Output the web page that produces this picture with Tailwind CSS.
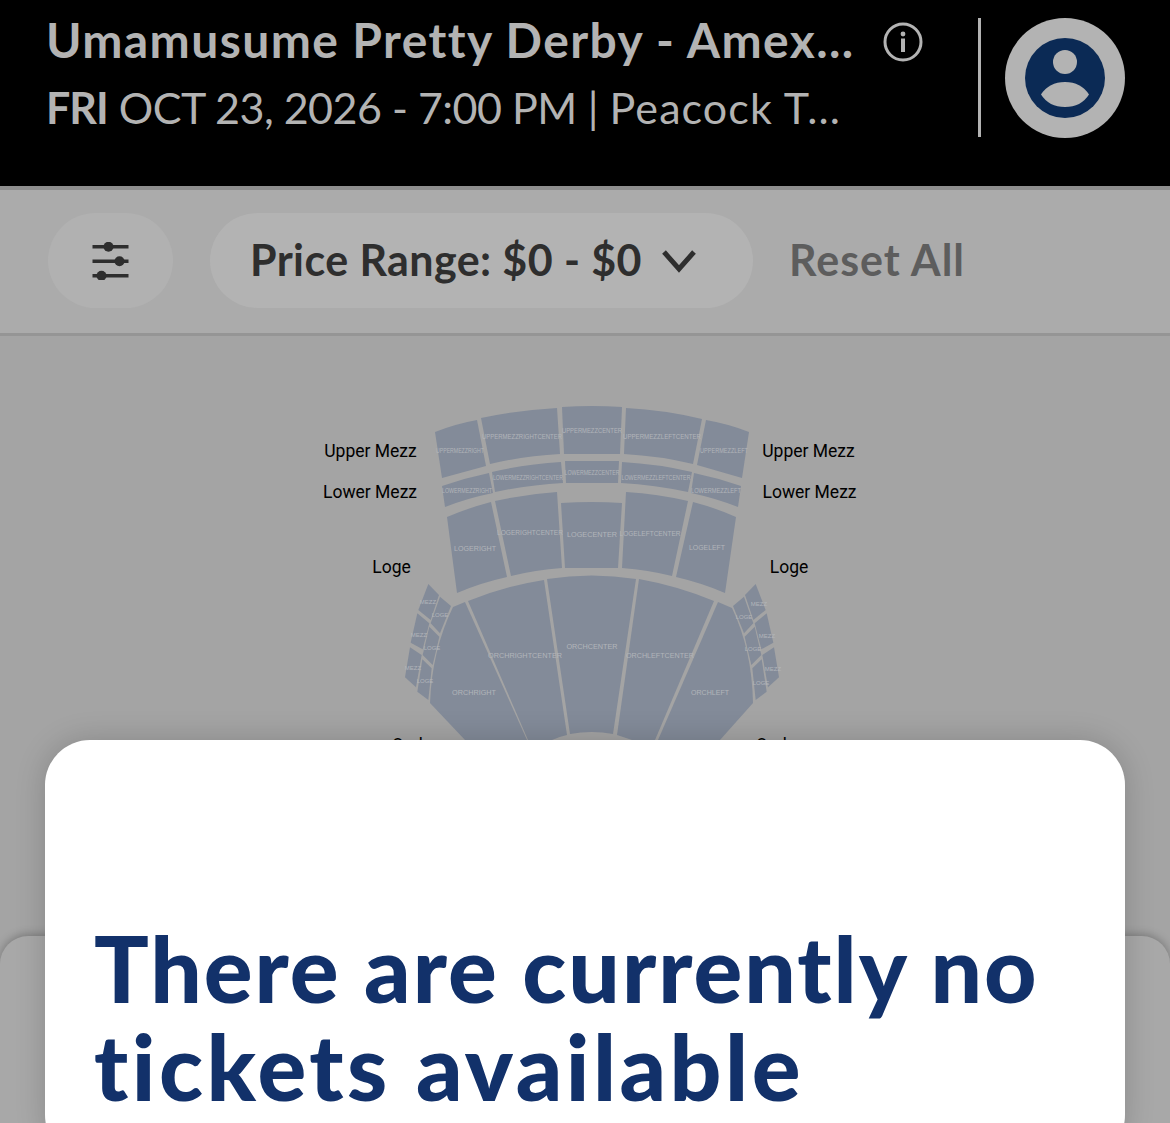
<!DOCTYPE html>
<html lang="en">
  <head>
    <meta charset="UTF-8" />
    <meta name="viewport" content="width=device-width, initial-scale=1.0" />
    <title>Tickets</title>
    <script src="https://cdn.jsdelivr.net/npm/@tailwindcss/browser@4"></script>
  </head>
  <body>
    <div class="relative flex flex-col w-[1170px] h-[1123px] overflow-hidden bg-[#a4a4a4] font-['Lato',sans-serif]">

      <!-- event header -->
      <header class="flex shrink-0 h-[190px] bg-black border-b-4 border-[#8e8e8e] pl-[46px] pt-[16px]">
        <div class="flex flex-col w-[932px]">
          <div class="flex items-center h-[48px]">
            <p class="w-[837px] whitespace-nowrap text-[48px] leading-[48px] font-bold text-[#b3b3b3] tracking-[1.4px]">Umamusume Pretty Derby - Amex...</p>
            <svg class="w-[42px] h-[42px] mt-[4px]" viewBox="0 0 42 42" fill="none">
              <circle cx="20" cy="21" r="18" stroke="#b3b3b3" stroke-width="3" />
              <circle cx="20" cy="13" r="2.4" fill="#b3b3b3" />
              <path d="M20 17.5V31" stroke="#b3b3b3" stroke-width="4" />
            </svg>
          </div>
          <p class="mt-[20px] whitespace-nowrap text-[43px] leading-[48px] text-[#b3b3b3]"><span class="font-bold tracking-[-1px]">FRI</span> <span class="tracking-[-0.5px]">OCT 23, 2026 - 7:00 PM</span> | <span class="tracking-[1.1px]">Peacock T...</span></p>
        </div>
        <div class="w-[3px] h-[119px] mt-[2px] bg-[#b3b3b3]"></div>
        <svg class="ml-[24px] mt-[2px] w-[120px] h-[120px]" viewBox="0 0 120 120">
          <circle cx="60" cy="60" r="60" fill="#b3b3b3" />
          <circle cx="60" cy="60" r="40" fill="#0b2a55" />
          <circle cx="60" cy="44" r="12" fill="#b3b3b3" />
          <path d="M36 76.5Q44 64 60 64Q76 64 84 76.5Q76 89 60 89Q44 89 36 76.5Z" fill="#b3b3b3" />
        </svg>
      </header>

      <!-- filters -->
      <div class="flex shrink-0 items-center h-[146px] bg-[#ababab] border-b-3 border-[#959595] pl-[48px] pb-[2px]">
        <button class="flex items-center justify-center w-[125px] h-[95px] rounded-full bg-[#b1b1b1]">
          <svg class="w-[38px] h-[38px]" viewBox="0 0 38 38" fill="#2e2e2e">
            <rect x="0.5" y="3" width="36" height="3.5" />
            <rect x="0.5" y="17.5" width="36" height="3.5" />
            <rect x="0.5" y="32" width="36" height="3.5" />
            <circle cx="16.5" cy="4.75" r="5" />
            <circle cx="27.5" cy="19.25" r="5" />
            <circle cx="9.5" cy="33.75" r="5" />
          </svg>
        </button>
        <button class="flex items-center ml-[37px] w-[543px] h-[95px] rounded-full bg-[#b3b3b3] pl-[40px]">
          <span class="w-[412px] text-left whitespace-nowrap text-[43px] font-bold tracking-[0.4px] text-[#2e2e2e]">Price Range: $0 - $0</span>
          <svg class="w-[34px] h-[24px]" viewBox="0 0 34 24" fill="none">
            <path d="M2 3l15 17L32 3" stroke="#2e2e2e" stroke-width="5" />
          </svg>
        </button>
        <button class="ml-[36px] whitespace-nowrap text-[43px] font-bold tracking-[1px] text-[#5d5d5d]">Reset All</button>
      </div>

      <!-- seat map -->
      <main class="relative flex-1">
        <svg class="absolute left-0 top-[-336px] w-[1170px] h-[1123px] font-['Roboto',sans-serif]" viewBox="0 0 1170 1123">
          <g fill="#838b99">
            <path d="M435 432Q455 424 477 420L486 466L442 478Z" />
            <path d="M481 418Q518 410 557 408L560 454Q524 456 490 464Z" />
            <path d="M562 407Q592 405 622 407L620 454H564Z" />
            <path d="M626 408Q665 410 702 419L693 464Q660 456 624 454Z" />
            <path d="M706 420Q729 424 749 432L742 478L697 465Z" />

            <path d="M442 486Q465 478 489 473L493 493Q468 498 445 507Z" />
            <path d="M492 472Q526 464 561 462L563 483Q528 485 495 492Z" />
            <path d="M565 461H619L618 483H566Z" />
            <path d="M622 462Q658 464 692 472L688 492Q655 485 621 483Z" />
            <path d="M694 473Q718 478 741 486L738 507Q715 498 691 493Z" />

            <path d="M447 517Q468 508 491 502L507 577Q480 583 457 593Z" />
            <path d="M495 501Q526 494 557 492L562 568Q535 570 511 576Z" />
            <path d="M561 503Q592 501 622 503L618 568H565Z" />
            <path d="M626 492Q658 494 688 501L672 576Q648 570 622 568Z" />
            <path d="M693 502Q716 508 736 517L725 593Q702 583 676 577Z" />

            <path d="M453 607L465 602L527 740H465L430 703Q432 650 453 607Z" />
            <path d="M468 601Q505 586 544 580L567 735Q558 737 552 740H528Z" />
            <path d="M547 579Q592 572 636 579L613 734Q592 730 570 734Z" />
            <path d="M639 579Q678 586 714 601L655 740H632L617 735Z" />
            <path d="M718 602L732 608Q752 650 753 703L720 740H658Z" />

            <g transform="translate(390 570) scale(.3333)">
              <path d="M115 42L147 75L122 150L85 120Z" />
              <path d="M82 130L118 160L98 238L62 218Z" />
              <path d="M60 232L95 255L78 352L45 322Z" />
              <path d="M150 80L183 108L150 190L122 160Z" />
              <path d="M118 170L148 200L128 285L98 255Z" />
              <path d="M97 268L125 295L115 390L82 365Z" />
            </g>
            <g transform="translate(794 570) scale(-.3333 .3333)">
              <path d="M115 42L147 75L122 150L85 120Z" />
              <path d="M82 130L118 160L98 238L62 218Z" />
              <path d="M60 232L95 255L78 352L45 322Z" />
              <path d="M150 80L183 108L150 190L122 160Z" />
              <path d="M118 170L148 200L128 285L98 255Z" />
              <path d="M97 268L125 295L115 390L82 365Z" />
            </g>
          </g>

          <g fill="#000" font-size="17.5">
            <text x="370.5" y="457" text-anchor="middle">Upper Mezz</text>
            <text x="370" y="498" text-anchor="middle">Lower Mezz</text>
            <text x="391.5" y="573" text-anchor="middle">Loge</text>
            <text x="410" y="751" text-anchor="middle">Orch</text>
            <text x="808.5" y="457" text-anchor="middle">Upper Mezz</text>
            <text x="809.5" y="498" text-anchor="middle">Lower Mezz</text>
            <text x="789" y="573" text-anchor="middle">Loge</text>
            <text x="774" y="751" text-anchor="middle">Orch</text>
          </g>

          <g fill="#b2b5ba" text-anchor="middle" font-family="Liberation Sans, sans-serif">
            <g font-size="6.8">
              <text x="460" y="452.5" textLength="48" lengthAdjust="spacingAndGlyphs">UPPERMEZZRIGHT</text>
              <text x="522" y="438.5" textLength="80" lengthAdjust="spacingAndGlyphs">UPPERMEZZRIGHTCENTER</text>
              <text x="592" y="432.5" textLength="60" lengthAdjust="spacingAndGlyphs">UPPERMEZZCENTER</text>
              <text x="662" y="438.5" textLength="78" lengthAdjust="spacingAndGlyphs">UPPERMEZZLEFTCENTER</text>
              <text x="724" y="452.5" textLength="48" lengthAdjust="spacingAndGlyphs">UPPERMEZZLEFT</text>
            </g>
            <g font-size="6.4">
              <text x="467" y="493" textLength="50" lengthAdjust="spacingAndGlyphs">LOWERMEZZRIGHT</text>
              <text x="528" y="479.5" textLength="70" lengthAdjust="spacingAndGlyphs">LOWERMEZZRIGHTCENTER</text>
              <text x="592" y="474.5" textLength="55" lengthAdjust="spacingAndGlyphs">LOWERMEZZCENTER</text>
              <text x="656" y="479.5" textLength="69" lengthAdjust="spacingAndGlyphs">LOWERMEZZLEFTCENTER</text>
              <text x="716" y="493" textLength="50" lengthAdjust="spacingAndGlyphs">LOWERMEZZLEFT</text>
            </g>
            <g font-size="7.5">
              <text x="475" y="551" textLength="42" lengthAdjust="spacingAndGlyphs">LOGERIGHT</text>
              <text x="530" y="535" textLength="66" lengthAdjust="spacingAndGlyphs">LOGERIGHTCENTER</text>
              <text x="592" y="537" textLength="50" lengthAdjust="spacingAndGlyphs">LOGECENTER</text>
              <text x="650" y="536" textLength="61" lengthAdjust="spacingAndGlyphs">LOGELEFTCENTER</text>
              <text x="707" y="550" textLength="36" lengthAdjust="spacingAndGlyphs">LOGELEFT</text>
              <text x="474" y="695" textLength="44" lengthAdjust="spacingAndGlyphs">ORCHRIGHT</text>
              <text x="525" y="658" textLength="74" lengthAdjust="spacingAndGlyphs">ORCHRIGHTCENTER</text>
              <text x="592" y="649" textLength="51" lengthAdjust="spacingAndGlyphs">ORCHCENTER</text>
              <text x="660" y="658" textLength="68" lengthAdjust="spacingAndGlyphs">ORCHLEFTCENTER</text>
              <text x="710" y="695" textLength="38" lengthAdjust="spacingAndGlyphs">ORCHLEFT</text>
            </g>
            <g font-size="6">
              <text x="428" y="604">MEZZ</text>
              <text x="440" y="617">LOGE</text>
              <text x="419" y="637">MEZZ</text>
              <text x="432" y="650">LOGE</text>
              <text x="413" y="670">MEZZ</text>
              <text x="425" y="683">LOGE</text>
              <text x="759" y="606">MEZZ</text>
              <text x="744" y="619">LOGE</text>
              <text x="767" y="638">MEZZ</text>
              <text x="753" y="651">LOGE</text>
              <text x="773" y="671">MEZZ</text>
              <text x="761" y="685">LOGE</text>
            </g>
          </g>
        </svg>
      </main>

      <!-- bottom sheet behind the dialog -->
      <div class="absolute left-0 right-0 top-[936px] bottom-0 rounded-t-[28px] bg-[#a8a8a8] shadow-[0_-2px_8px_rgba(0,0,0,0.25)]"></div>

      <!-- no tickets dialog -->
      <section class="absolute left-[45px] right-[45px] top-[740px] h-[420px] rounded-[45px] bg-white pl-[49px] pt-[179px] shadow-[0_0_30px_rgba(0,0,0,0.18)]">
        <h1 class="whitespace-nowrap text-[91px] leading-[98px] font-black text-[#12316a] [font-variant-ligatures:none]"><span class="tracking-[2px]">There are currently no</span><br /><span class="tracking-[3.5px]">tickets available</span></h1>
      </section>
    </div>
  </body>
</html>
